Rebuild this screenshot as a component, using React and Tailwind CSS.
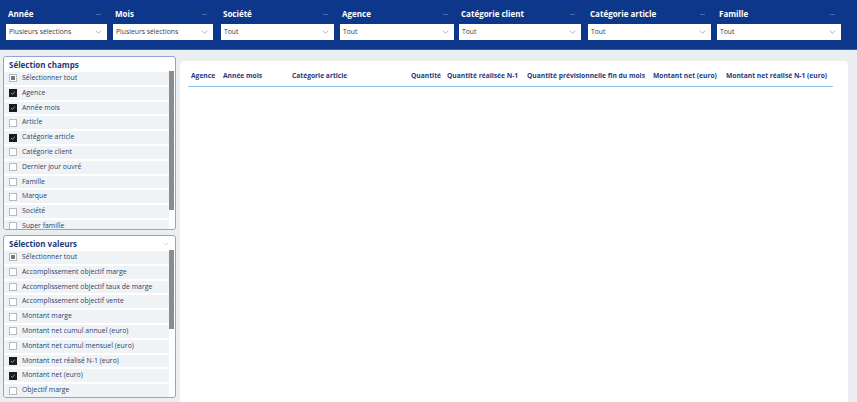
import React from 'react';

const filters = [
  { label: 'Année', value: 'Plusieurs sélections', cls: 'ml-[6px] w-[101px]' },
  { label: 'Mois', value: 'Plusieurs sélections', cls: 'ml-[6px] w-[100px]' },
  { label: 'Société', value: 'Tout', cls: 'ml-[8px] w-[113px]' },
  { label: 'Agence', value: 'Tout', cls: 'ml-[6px] w-[114px]' },
  { label: 'Catégorie client', value: 'Tout', cls: 'ml-[5px] w-[122px]' },
  { label: 'Catégorie article', value: 'Tout', cls: 'ml-[7px] w-[123px]' },
  { label: 'Famille', value: 'Tout', cls: 'ml-[6px] w-[124px]' },
];

const champs = [
  ['Sélectionner tout', 'partial'],
  ['Agence', 'on'],
  ['Année mois', 'on'],
  ['Article', 'off'],
  ['Catégorie article', 'on'],
  ['Catégorie client', 'off'],
  ['Dernier jour ouvré', 'off'],
  ['Famille', 'off'],
  ['Marque', 'off'],
  ['Société', 'off'],
  ['Super famille', 'off'],
];

const valeurs = [
  ['Sélectionner tout', 'partial'],
  ['Accomplissement objectif marge', 'off'],
  ['Accomplissement objectif taux de marge', 'off'],
  ['Accomplissement objectif vente', 'off'],
  ['Montant marge', 'off'],
  ['Montant net cumul annuel (euro)', 'off'],
  ['Montant net cumul mensuel (euro)', 'off'],
  ['Montant net réalisé N-1 (euro)', 'on'],
  ['Montant net (euro)', 'on'],
  ['Objectif marge', 'off'],
  ['', 'off'],
];

const columns = [
  { text: 'Agence', cls: 'w-[32px] pl-[3px]' },
  { text: 'Année mois', cls: 'w-[69px] pl-[3px]' },
  { text: 'Catégorie article', cls: 'w-[116px] pl-[3px]' },
  { text: 'Quantité', cls: 'w-[39px] pr-[3px] text-right' },
  { text: 'Quantité réalisée N-1', cls: 'w-[80px] pl-[3px]' },
  { text: 'Quantité prévisionnelle fin du mois', cls: 'w-[126px] pl-[3px]' },
  { text: 'Montant net (euro)', cls: 'w-[73px] pl-[3px]' },
  { text: 'Montant net réalisé N-1 (euro)', cls: 'w-[110px] pl-[3px]' },
];

const Chevron = ({ className }) => (
  <svg viewBox="0 0 10 6" className={className} fill="none" stroke="currentColor" strokeWidth="1">
    <path d="M1 1l4 4 4-4" />
  </svg>
);

const Checkbox = ({ state }) => {
  if (state === 'on') {
    return (
      <span className="w-[8px] h-[8px] bg-[#1b1b1b] flex items-center justify-center shrink-0">
        <svg viewBox="0 0 8 8" className="w-[6px] h-[6px]" fill="none" stroke="#cfcfcf" strokeWidth="1">
          <path d="M1.5 4.2l1.6 1.5 3.4-3.4" />
        </svg>
      </span>
    );
  }
  if (state === 'partial') {
    return (
      <span className="w-[8px] h-[8px] border border-[#b9b9b9] bg-white flex items-center justify-center shrink-0">
        <span className="w-[4px] h-[4px] bg-[#7a7a7a]" />
      </span>
    );
  }
  return <span className="w-[8px] h-[8px] border border-[#b9b9b9] bg-white shrink-0" />;
};

const SlicerPanel = ({ title, items, heightCls, thumbCls, chevron }) => (
  <div className={`${heightCls} border border-[#8ea6cf] rounded-[3px] bg-white flex flex-col overflow-hidden`}>
    <div className="h-[14px] flex items-center justify-between pl-[5px] pr-[6px] pt-[1px] shrink-0">
      <span className="text-[8px] font-bold text-[#1d3a78] leading-none">{title}</span>
      {chevron && <Chevron className="w-[6px] h-[4px] text-[#a9b3c4]" />}
    </div>
    <div className="flex flex-1 min-h-0">
      <div className="flex-1 flex flex-col overflow-hidden pt-[1px]">
        {items.map(([label, state], i) => (
          <div key={i} className="h-[12.8px] mb-[2px] shrink-0 bg-[#eff3f5] flex items-center gap-[5px] pl-[5px]">
            <Checkbox state={state} />
            {label && <span className="text-[6.9px] text-[#2c3f6c] whitespace-nowrap leading-none">{label}</span>}
          </div>
        ))}
      </div>
      <div className="w-[5px] mr-[1px] shrink-0">
        <div className={`${thumbCls} bg-[#8c8c8c]`} />
      </div>
    </div>
  </div>
);

export default function App() {
  return (
    <div className="w-[857px] h-[402px] overflow-hidden bg-[#eaeef0] font-['Open_Sans','Noto_Sans',sans-serif]">
      <div className="h-[50px] bg-[#0c378a] border-b border-[#3c5f9f] flex">
        {filters.map((f) => (
          <div key={f.label} className={`${f.cls} flex flex-col`}>
            <div className="h-[24px] flex items-end justify-between pb-[6px] pl-[2px] pr-[6px]">
              <span className="text-[8px] font-bold text-white leading-none">{f.label}</span>
              <span className="w-[5px] h-[1px] bg-[#4d6aa5] mb-[3px]" />
            </div>
            <div className="h-[16px] bg-white flex items-center justify-between pl-[3px] pr-[5px]">
              <span className="text-[6.8px] text-[#3a3a3a] leading-none">{f.value}</span>
              <Chevron className="w-[7px] h-[4px] text-[#8a8a8a]" />
            </div>
          </div>
        ))}
      </div>

      <div className="flex pl-[3px] pt-[6px] gap-[4px]">
        <div className="w-[173px] flex flex-col gap-[5px] shrink-0">
          <SlicerPanel title="Sélection champs" items={champs} heightCls="h-[174px]" thumbCls="h-[139px]" />
          <SlicerPanel title="Sélection valeurs" items={valeurs} heightCls="h-[163px]" thumbCls="h-[79px]" chevron />
        </div>

        <div className="w-[668px] h-[400px] mt-[5px] bg-white rounded-t-[4px] pt-[12px] pl-[8px]">
          <div className="w-[645px] flex border-b border-[#8cc1ec] pb-[6px]">
            {columns.map((c) => (
              <div key={c.text} className={`${c.cls} text-[6.7px] font-bold text-[#1e3a7e] whitespace-nowrap leading-none shrink-0`}>
                {c.text}
              </div>
            ))}
          </div>
        </div>
      </div>
    </div>
  );
}
